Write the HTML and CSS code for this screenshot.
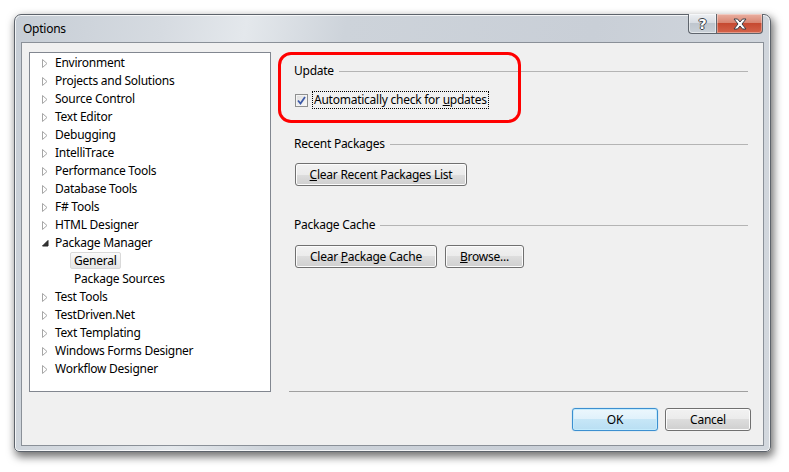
FILE: index.html
```html
<html>
    <head>
        <link rel="stylesheet" href="styles.css">
    </head>
    <body>
        <div class="window">
            <div class="titlebar">
                <span class="title">Options</span>
                <div class="caption-buttons">
                    <div class="cap help"><span>?</span></div>
                    <div class="cap close">
                        <svg width="14" height="12" viewBox="0 0 14 12">
                            <polygon points="1,1 4.5,1 7,4 9.5,1 13,1 9,6 13,11 9.5,11 7,8 4.5,11 1,11 5,6" fill="#fff" stroke="#3a3f46" stroke-width="1"/>
                        </svg>
                    </div>
                </div>
            </div>
            <div class="client">
                <div class="main">
                    <ul class="tree">
                        <li><span class="twisty"><svg width="6" height="9"><polygon points="0.5,0.5 5,4.5 0.5,8.5" fill="#fff" stroke="#a6a6a6"/></svg></span>Environment</li>
                        <li><span class="twisty"><svg width="6" height="9"><polygon points="0.5,0.5 5,4.5 0.5,8.5" fill="#fff" stroke="#a6a6a6"/></svg></span>Projects and Solutions</li>
                        <li><span class="twisty"><svg width="6" height="9"><polygon points="0.5,0.5 5,4.5 0.5,8.5" fill="#fff" stroke="#a6a6a6"/></svg></span>Source Control</li>
                        <li><span class="twisty"><svg width="6" height="9"><polygon points="0.5,0.5 5,4.5 0.5,8.5" fill="#fff" stroke="#a6a6a6"/></svg></span>Text Editor</li>
                        <li><span class="twisty"><svg width="6" height="9"><polygon points="0.5,0.5 5,4.5 0.5,8.5" fill="#fff" stroke="#a6a6a6"/></svg></span>Debugging</li>
                        <li><span class="twisty"><svg width="6" height="9"><polygon points="0.5,0.5 5,4.5 0.5,8.5" fill="#fff" stroke="#a6a6a6"/></svg></span>IntelliTrace</li>
                        <li><span class="twisty"><svg width="6" height="9"><polygon points="0.5,0.5 5,4.5 0.5,8.5" fill="#fff" stroke="#a6a6a6"/></svg></span>Performance Tools</li>
                        <li><span class="twisty"><svg width="6" height="9"><polygon points="0.5,0.5 5,4.5 0.5,8.5" fill="#fff" stroke="#a6a6a6"/></svg></span>Database Tools</li>
                        <li><span class="twisty"><svg width="6" height="9"><polygon points="0.5,0.5 5,4.5 0.5,8.5" fill="#fff" stroke="#a6a6a6"/></svg></span>F# Tools</li>
                        <li><span class="twisty"><svg width="6" height="9"><polygon points="0.5,0.5 5,4.5 0.5,8.5" fill="#fff" stroke="#a6a6a6"/></svg></span>HTML Designer</li>
                        <li><span class="twisty"><svg width="7" height="7"><polygon points="6,0.5 6,6 0.5,6" fill="#333" stroke="#262626"/></svg></span>Package Manager</li>
                        <li class="child"><span class="sel">General</span></li>
                        <li class="child"><span class="plain">Package Sources</span></li>
                        <li><span class="twisty"><svg width="6" height="9"><polygon points="0.5,0.5 5,4.5 0.5,8.5" fill="#fff" stroke="#a6a6a6"/></svg></span>Test Tools</li>
                        <li><span class="twisty"><svg width="6" height="9"><polygon points="0.5,0.5 5,4.5 0.5,8.5" fill="#fff" stroke="#a6a6a6"/></svg></span>TestDriven.Net</li>
                        <li><span class="twisty"><svg width="6" height="9"><polygon points="0.5,0.5 5,4.5 0.5,8.5" fill="#fff" stroke="#a6a6a6"/></svg></span>Text Templating</li>
                        <li><span class="twisty"><svg width="6" height="9"><polygon points="0.5,0.5 5,4.5 0.5,8.5" fill="#fff" stroke="#a6a6a6"/></svg></span>Windows Forms Designer</li>
                        <li><span class="twisty"><svg width="6" height="9"><polygon points="0.5,0.5 5,4.5 0.5,8.5" fill="#fff" stroke="#a6a6a6"/></svg></span>Workflow Designer</li>
                    </ul>
                    <div class="page">
                        <div class="highlight"></div>
                        <div class="group-head first"><span>Update</span></div>
                        <div class="check-row">
                            <span class="checkbox">
                                <svg width="9" height="9" viewBox="0 0 9 9"><polyline points="1,4.5 3.5,7.5 8,1" fill="none" stroke="#3d5aa8" stroke-width="1.8"/></svg>
                            </span>
                            <span class="focus">Automatically check for <u>u</u>pdates</span>
                        </div>
                        <div class="group-head recent"><span>Recent Packages</span></div>
                        <div class="btn-row">
                            <button class="btn wide"><u>C</u>lear Recent Packages List</button>
                        </div>
                        <div class="group-head cache"><span>Package Cache</span></div>
                        <div class="btn-row">
                            <button class="btn cache-btn">Clear <u>P</u>ackage Cache</button>
                            <button class="btn browse"><u>B</u>rowse...</button>
                        </div>
                    </div>
                </div>
                <div class="footer">
                    <button class="btn dialog default">OK</button>
                    <button class="btn dialog">Cancel</button>
                </div>
            </div>
        </div>
    </body>
</html>
```

FILE: styles.css
```css
body {
    margin: 0;
    background: #fff;
    font-family: "Noto Sans", "Open Sans", sans-serif;
    font-size: 12px;
    letter-spacing: -0.25px;
    color: #000;
}
.window {
    box-sizing: border-box;
    width: 757px;
    height: 438px;
    margin: 14px 0 0 14px;
    padding: 0 6px 5px 6px;
    border: 1px solid #5d636b;
    border-radius: 7px 7px 5px 5px;
    background: linear-gradient(100deg, #c6cdd5 0%, #d6dbe1 18%, #e4e8ec 28%, #cdd3da 40%, #c9cfd7 70%, #d3d8de 100%);
    box-shadow: 2px 4px 9px 1px rgba(0,0,0,0.55), inset 0 0 0 1px rgba(255,255,255,0.75);
    display: flex;
    flex-direction: column;
}
.titlebar {
    height: 27px;
    display: flex;
    justify-content: space-between;
    align-items: flex-start;
}
.title {
    padding-left: 2px;
    line-height: 28px;
    font-size: 12px;
    color: #000;
}
.caption-buttons {
    display: flex;
    margin-top: -1px;
    margin-right: 1px;
}
.cap {
    box-sizing: border-box;
    height: 20px;
    display: flex;
    align-items: center;
    justify-content: center;
    border: 1px solid #5f656d;
    border-top: none;
}
.cap.help {
    width: 28px;
    border-right: none;
    border-radius: 0 0 0 4px;
    background: linear-gradient(#eef0f3 0%, #d8dde3 45%, #bfc6ce 50%, #c9d0d7 100%);
    box-shadow: inset 0 0 0 1px rgba(255,255,255,0.5);
}
.cap.help span {
    font-family: "DejaVu Sans", sans-serif;
    font-weight: bold;
    font-size: 14px;
    letter-spacing: 0;
    color: #fff;
    line-height: 1;
    text-shadow: 1px 0 0 #3a3f46, -1px 0 0 #3a3f46, 0 1px 0 #3a3f46, 0 -1px 0 #3a3f46;
}
.cap.close {
    width: 47px;
    border-radius: 0 0 4px 0;
    background: linear-gradient(#eab0a2 0%, #d98672 45%, #c64a31 50%, #d4634a 100%);
    box-shadow: inset 0 0 0 1px rgba(255,255,255,0.35);
}
.client {
    flex: 1;
    box-sizing: border-box;
    border: 1px solid #8a9098;
    background: #f0f0f0;
    padding: 9px 15px 0 7px;
    display: flex;
    flex-direction: column;
}
.main {
    display: flex;
    gap: 18px;
    height: 340px;
}
.tree {
    box-sizing: border-box;
    width: 242px;
    margin: 0;
    padding: 0;
    list-style: none;
    background: #fff;
    border: 1px solid #828790;
}
.tree li {
    height: 18px;
    display: flex;
    align-items: center;
    white-space: nowrap;
}
.twisty {
    width: 13px;
    margin-left: 12px;
    display: flex;
    align-items: center;
    padding-top: 2px;
}
.tree li.child {
    padding-left: 40px;
}
.sel {
    box-sizing: border-box;
    height: 17px;
    line-height: 15px;
    padding: 0 4px 0 3px;
    border: 1px solid #d9d9d9;
    border-radius: 2px;
    background: linear-gradient(#fafafa, #e5e5e5);
}
.plain {
    padding-left: 4px;
}
.page {
    position: relative;
    width: 459px;
    box-sizing: border-box;
    border-bottom: 1px solid #a0a0a0;
}
.highlight {
    position: absolute;
    left: -11px;
    top: 0;
    width: 243px;
    height: 71px;
    box-sizing: border-box;
    border: 3px solid #ff0000;
    border-radius: 13px;
}
.group-head {
    display: flex;
    align-items: center;
    height: 18px;
    padding-left: 5px;
}
.group-head::after {
    content: "";
    flex: 1;
    height: 1px;
    margin-left: 5px;
    margin-top: 2px;
    background: #b4b4b4;
}
.group-head.first {
    margin-top: 9px;
}
.group-head.recent {
    margin-top: 25px;
}
.group-head.cache {
    margin-top: 29px;
}
.check-row {
    margin-top: 12px;
    height: 18px;
    padding-left: 6px;
    display: flex;
    align-items: center;
}
.checkbox {
    box-sizing: border-box;
    width: 13px;
    height: 13px;
    border: 1px solid #8e8f8f;
    background: linear-gradient(135deg, #dcdcdc, #fbfbfb);
    box-shadow: inset 0 0 0 1px #f4f4f4;
    display: flex;
    align-items: center;
    justify-content: center;
    margin-right: 4px;
}
.focus {
    border: 1px dotted #000;
    padding: 0 1px;
    line-height: 16px;
}
.btn-row {
    display: flex;
    gap: 8px;
    padding-left: 6px;
    margin-top: 11px;
}
.btn-row + .group-head + .btn-row {
    margin-top: 12px;
}
.btn {
    box-sizing: border-box;
    height: 23px;
    padding: 0;
    font-family: "Noto Sans", "Open Sans", sans-serif;
    font-size: 12px;
    letter-spacing: -0.25px;
    color: #000;
    border: 1px solid #707070;
    border-radius: 3px;
    background: linear-gradient(#f2f2f2 0%, #ebebeb 50%, #dddddd 50%, #cfcfcf 100%);
    box-shadow: inset 0 0 0 1px #fcfcfc;
}
.btn.wide {
    width: 172px;
}
.btn.cache-btn {
    width: 142px;
}
.btn.browse {
    width: 79px;
}
.footer {
    display: flex;
    justify-content: flex-end;
    gap: 7px;
    margin-top: 16px;
    margin-right: -3px;
}
.btn.dialog {
    width: 86px;
}
.btn.default {
    border-color: #3c8fd0;
    background: linear-gradient(#ecf7fd 0%, #dff1fb 50%, #c6e6f7 50%, #b9dff3 100%);
    box-shadow: inset 0 0 0 1px #c5ebfc, 0 0 1px #53b6f0;
}
```
